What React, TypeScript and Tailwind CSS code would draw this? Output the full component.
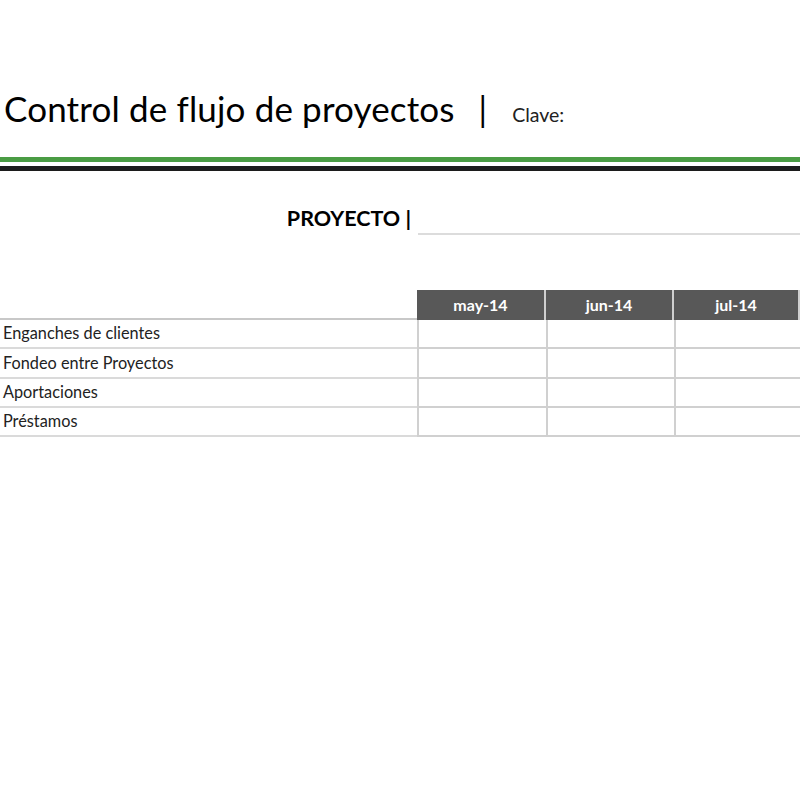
const months = ['may-14', 'jun-14', 'jul-14'];
const rows = ['Enganches de clientes', 'Fondeo entre Proyectos', 'Aportaciones', 'Préstamos'];

export default function App() {
  return (
    <div className="w-[800px] h-[800px] bg-white text-black overflow-hidden" style={{ fontFamily: 'Lato, "Open Sans", sans-serif' }}>
      {/* Title */}
      <div className="h-[157px] pl-[4px] pt-[88px] flex items-baseline">
        <h1 className="text-[35px] leading-[40px] font-normal tracking-[0.15px]">Control de flujo de proyectos</h1>
        <span className="ml-[24px] text-[34px] leading-[40px]">|</span>
        <span className="ml-[25px] text-[19.5px] text-[#222]">Clave:</span>
      </div>

      {/* Rules */}
      <div className="h-[5px] bg-[#4a9c44]"></div>
      <div className="h-[4px]"></div>
      <div className="h-[5px] bg-[#1c1c1c]"></div>

      {/* Project */}
      <div className="flex items-end h-[63px]">
        <div className="w-[418px] flex justify-end pr-[7px] pb-[4px]">
          <span className="text-[21.5px] font-bold leading-[24px]">PROYECTO |</span>
        </div>
        <div className="flex-1 border-b-2 border-[#dcdcdc] mb-[-1px]"></div>
      </div>

      {/* Table */}
      <div className="mt-[56px] grid grid-cols-[417px_129px_128px_126px]">
        <div className="h-[30px] border-b-2 border-[#c8c8c8]"></div>
        {months.map((m) => (
          <div
            key={m}
            className="h-[30px] bg-[#585858] border-r-2 border-[#cfcfcf] flex items-center justify-center text-white font-bold text-[16px]"
          >
            {m}
          </div>
        ))}
        {rows.map((r) => (
          <>
            <div key={r} className="h-[29.25px] border-b-2 border-[#dadada] flex items-center pl-[3px] text-[16.3px] text-[#222]">
              {r}
            </div>
            {months.map((m) => (
              <div key={r + m} className="h-[29.25px] border-b-2 border-l-2 border-[#d0d0d0]"></div>
            ))}
          </>
        ))}
      </div>
    </div>
  );
}
